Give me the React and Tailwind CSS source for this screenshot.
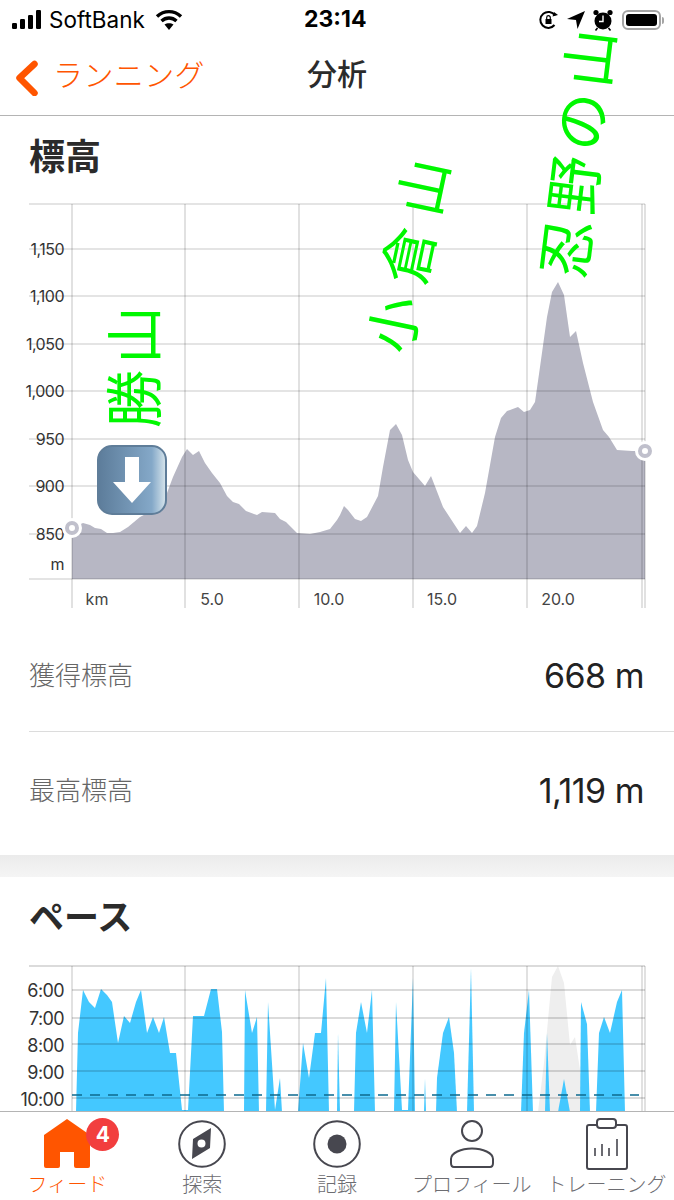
const sans = "font-['Inter','Noto_Sans_CJK_JP',sans-serif]";

const elevation =
  "72,528 83,523 90,525 95,528 101,529 107,533 113,533 120,532 128,527 140,517 157,508 167,493 173,477 182,457 187,449 193,455 199,451 205,463 212,473 220,483 227,496 233,502 239,504 246,511 257,515 262,512 275,513 280,519 286,522 297,533 310,534 320,532 330,529 337,520 340,515 344,506 348,510 355,519 361,521 367,517 378,496 383,467 390,430 396,424 402,435 408,460 413,472 425,486 431,476 443,507 460,533 466,526 472,533 477,526 485,493 495,437 501,418 507,411 518,407 524,412 530,410 535,402 540,367 547,317 552,292 558,282 564,295 570,337 576,331 583,363 593,402 603,430 609,437 617,450 632,451 645,451 645,579 72,579";

const elevYLabels = [
  ["1,150", 249],
  ["1,100", 296],
  ["1,050", 344],
  ["1,000", 391],
  ["950", 439],
  ["900", 486],
  ["850", 534],
  ["m", 564],
];
const elevGrid = [204, 249, 296, 344, 391, 439, 486, 534, 579];
const vLines = [72, 185, 299, 413, 527, 642, 645];
const kmLabels = [
  ["km", 97],
  ["5.0", 212],
  ["10.0", 329],
  ["15.0", 442],
  ["20.0", 558],
];

const paceGrid = [966, 990, 1018, 1044, 1071, 1098];
const paceLabels = [
  ["6:00", 990],
  ["7:00", 1018],
  ["8:00", 1045],
  ["9:00", 1072],
  ["10:00", 1099],
];
const paceShapes = [
  "76,1112 78,1033 83,990 89,1002 95,1008 101,989 107,995 112,1002 118,1043 124,1016 130,1023 136,1002 141,990 147,1033 153,1017 159,1033 164,1017 170,1053 176,1053 182,1110 188,1110 193,1016 204,1016 211,989 217,989 222,1032 224,1112",
  "244,1112 245,990 252,1033 257,1017 259,1112",
  "266,1112 268,1002 275,1110 280,1078 282,1112",
  "298,1112 303,1043 309,1078 315,1033 321,1033 326,978 329,1112",
  "337,1112 338,1033 340,1112",
  "354,1112 356,1033 361,1002 367,1033 372,990 375,1112",
  "394,1112 396,1002 402,1110 408,1110 413,978 415,1112",
  "424,1112 425,1078 426,1112",
  "436,1112 437,1078 443,1033 449,1017 454,1053 457,1112",
  "467,1112 471,968 474,1112",
  "521,1112 524,1033 529,990 533,1112",
  "545,1112 547,1033 550,1112",
  "558,1112 564,1079 570,1112",
  "580,1112 581,1002 587,1024 590,1112",
  "596,1112 599,1033 604,1017 610,1033 617,1002 622,990 625,1112",
];

function StatusBar() {
  return (
    <div className="relative h-[40px] flex items-center justify-between pl-[12px] pr-[10px] text-black">
      <div className="flex items-center gap-[7px]">
        <svg width="30" height="20" viewBox="0 0 30 20" fill="currentColor">
          <rect x="0" y="13" width="5" height="6" rx="1.2" />
          <rect x="8" y="9" width="5" height="10" rx="1.2" />
          <rect x="16" y="5" width="5" height="14" rx="1.2" />
          <rect x="24" y="0" width="5" height="19" rx="1.2" />
        </svg>
        <span className="text-[22.5px] leading-none font-normal font-['Inter',sans-serif]">SoftBank</span>
        <svg className="ml-[3px]" width="28" height="22" viewBox="0 0 28 22" fill="none" stroke="currentColor" strokeWidth="3.4">
          <path d="M2 7.5 C9 1 19 1 26 7.5" />
          <path d="M6.5 12 C11 8 17 8 21.5 12" />
          <path fill="currentColor" stroke="none" d="M14 21 L9.5 15.6 C12 13.8 16 13.8 18.5 15.6 Z" />
        </svg>
      </div>
      <span className="absolute left-[304px] top-[7px] text-[23px] leading-[24px] font-bold font-['Inter',sans-serif]">23:14</span>
      <div className="flex items-center gap-[9px]">
        <svg width="19" height="20" viewBox="0 0 19 20" fill="none" stroke="currentColor" strokeWidth="2">
          <path d="M15.5 15 A8 8 0 1 1 16 5.5" />
          <path fill="currentColor" stroke="none" d="M19 5 L13.5 6.5 L15 2 Z" />
          <rect x="6.5" y="9" width="6" height="5" fill="currentColor" stroke="none" />
          <path d="M7.7 9 V7.5 A1.8 1.8 0 0 1 11.3 7.5 V9" strokeWidth="1.2" />
        </svg>
        <svg width="18" height="18" viewBox="0 0 18 18" fill="currentColor">
          <path d="M18 0 L10.5 18 L9 9 L0 8 Z" />
        </svg>
        <svg className="-ml-[1px]" width="20" height="22" viewBox="0 0 20 22" fill="currentColor">
          <circle cx="10" cy="12" r="8.5" />
          <circle cx="3" cy="3.5" r="2.6" />
          <circle cx="17" cy="3.5" r="2.6" />
          <path d="M4.5 19 L2.5 21.5 M15.5 19 L17.5 21.5" stroke="currentColor" strokeWidth="1.6" />
          <path d="M10 6.5 V12.5 H6" fill="none" stroke="#fff" strokeWidth="1.4" />
        </svg>
        <div className="flex items-center">
          <div className="w-[39px] h-[20px] rounded-[6px] border-2 border-[#a5a5a5] p-[2px]">
            <div className="w-full h-full rounded-[3px] bg-black" />
          </div>
          <div className="w-[2px] h-[7px] rounded-r-sm bg-[#a5a5a5] ml-[1px]" />
        </div>
      </div>
    </div>
  );
}

function NavBar() {
  return (
    <div className="relative h-[75px] flex items-center border-b border-[#b4b4b4] box-content">
      <svg className="ml-[15px]" width="24" height="36" viewBox="0 0 24 36" fill="none" stroke="#ff5500" strokeWidth="6.5" strokeLinecap="round" strokeLinejoin="round">
        <path d="M19.5 4 L4.5 18 L19.5 33" />
      </svg>
      <span className={`ml-[14px] -mt-[4px] text-[30px] tracking-[0.4px] font-light text-[#ff5500] ${sans}`}>ランニング</span>
      <span className={`absolute left-[307px] top-[15px] text-[30px] leading-[38px] font-medium text-[#2b2b2b] ${sans}`}>分析</span>
    </div>
  );
}

function ElevationChart() {
  return (
    <svg className="block" width="674" height="416" viewBox="0 200 674 416">
      <polygon points={elevation} fill="#b7b7c4" />
      {elevGrid.map((y) => (
        <line key={y} x1="29" x2="645" y1={y} y2={y} stroke="#000" strokeOpacity="0.14" strokeWidth="1.5" />
      ))}
      {vLines.map((x) => (
        <line key={x} x1={x} x2={x} y1="204" y2="608" stroke="#000" strokeOpacity="0.16" strokeWidth="1.5" />
      ))}
      {elevYLabels.map(([t, y]) => (
        <text key={t} x="64" y={y + 6} textAnchor="end" fontSize="16" letterSpacing="-0.5" fill="#333" fontFamily="Inter, sans-serif">
          {t}
        </text>
      ))}
      {kmLabels.map(([t, x]) => (
        <text key={t} x={x} y="605" textAnchor="middle" fontSize="16" fill="#444" fontFamily="Inter, sans-serif">
          {t}
        </text>
      ))}
      <circle cx="72" cy="528" r="10" fill="#fff" />
      <circle cx="72" cy="528" r="5" fill="#fff" stroke="#c0c0cc" strokeWidth="4" />
      <circle cx="645" cy="451" r="10" fill="#fff" />
      <circle cx="645" cy="451" r="5" fill="#fff" stroke="#c0c0cc" strokeWidth="4" />
    </svg>
  );
}

function PaceChart() {
  return (
    <svg className="block" width="674" height="160" viewBox="0 960 674 160">
      <polygon points="538,1112 544,1063 552,977 558,966 564,983 570,1045 575,1037 582,1083 586,1112" fill="#eeeeee" />
      {paceShapes.map((p) => (
        <polygon key={p} points={p} fill="#44c8ff" />
      ))}
      {paceGrid.map((y) => (
        <line key={y} x1={y === 966 ? 29 : 72} x2="645" y1={y} y2={y} stroke="#000" strokeOpacity="0.14" strokeWidth="2" />
      ))}
      {vLines.map((x) => (
        <line key={x} x1={x} x2={x} y1="966" y2="1112" stroke="#000" strokeOpacity="0.16" strokeWidth="1.5" />
      ))}
      <line x1="72" x2="639" y1="1095" y2="1095" stroke="#0d6a8f" strokeWidth="1.6" strokeDasharray="10 8" />
      {paceLabels.map(([t, y]) => (
        <text key={t} x="64" y={y + 7} textAnchor="end" fontSize="18" letterSpacing="-0.6" fill="#333" fontFamily="Inter, sans-serif">
          {t}
        </text>
      ))}
    </svg>
  );
}

function StatRow({ label, value, border }) {
  return (
    <div className={`ml-[29px] h-[116px] flex items-center justify-between pr-[30px] ${border ? "pt-[4px] border-b border-[#dcdcdc]" : ""}`}>
      <span className={`text-[26px] font-light text-[#666] ${sans}`}>{label}</span>
      <span className={`text-[34px] text-[#222] tracking-[-0.5px] ${sans}`}>{value}</span>
    </div>
  );
}

function TabBar() {
  const tabs = [
    {
      label: "フィード",
      active: true,
      icon: (
        <div className="relative">
          <svg className="block" width="48" height="50" viewBox="0 0 48 50" fill="#ff5500">
            <path d="M24 0 L47 16 V47 Q47 49 45 49 H33 Q31 49 31 47 V33 H17 V47 Q17 49 15 49 H3 Q1 49 1 47 V16 Z" />
          </svg>
          <div className="absolute -top-[1px] left-[43px] w-[33px] h-[33px] rounded-full bg-[#f23e3e] flex items-center justify-center text-white text-[21px] font-bold font-['Inter',sans-serif]">
            4
          </div>
        </div>
      ),
    },
    {
      label: "探索",
      icon: (
        <svg width="48" height="48" viewBox="0 0 48 48" fill="none">
          <circle cx="24" cy="24" r="22.8" stroke="#47474f" strokeWidth="2" />
          <path fillRule="evenodd" fill="#47474f" d="M33 8 L32 28 L14 39 L15 19 Z M23.5 19.5 A4 4 0 1 0 23.5 27.5 A4 4 0 1 0 23.5 19.5 Z" />
        </svg>
      ),
    },
    {
      label: "記録",
      icon: (
        <svg width="48" height="48" viewBox="0 0 48 48" fill="none">
          <circle cx="24" cy="24" r="22.8" stroke="#47474f" strokeWidth="2" />
          <circle cx="24" cy="24" r="9.5" fill="#47474f" />
        </svg>
      ),
    },
    {
      label: "プロフィール",
      icon: (
        <svg width="46" height="50" viewBox="0 0 46 50" fill="none" stroke="#47474f" strokeWidth="2">
          <circle cx="23" cy="12" r="10" />
          <path d="M5 48 Q2 48 2 44 V40 C2 34 12 29.5 23 29.5 C34 29.5 44 34 44 40 V44 Q44 48 41 48 Z" />
        </svg>
      ),
    },
    {
      label: "トレーニング",
      icon: (
        <svg width="44" height="52" viewBox="0 0 44 52" fill="none" stroke="#47474f" strokeWidth="2">
          <rect x="2" y="7" width="40" height="44" rx="2" />
          <rect x="12" y="1" width="19" height="9" rx="3" fill="#fff" />
          <path d="M10 30 V38 M17 26 V38 M24 30 V38 M32 21 V38" strokeWidth="1.6" />
        </svg>
      ),
    },
  ];

  return (
    <div className="h-[89px] shrink-0 bg-white border-t border-[#b4b4b4] flex">
      {tabs.map((t) => (
        <div key={t.label} className="w-[134.8px] relative flex flex-col items-center">
          <div className="h-[58px] mt-[3px] flex items-center justify-center">{t.icon}</div>
          <span className={`whitespace-nowrap text-[20px] leading-[24px] ${sans} ${t.active ? "text-[#ff5500]" : "text-[#6d6d72]"} font-light`}>
            {t.label}
          </span>
        </div>
      ))}
    </div>
  );
}

const green = "absolute z-20 whitespace-nowrap text-[#00f700] font-['Noto_Sans_CJK_JP',sans-serif] font-normal leading-none -translate-x-1/2 -translate-y-1/2";

export default function App() {
  return (
    <div className="relative w-[674px] h-[1200px] overflow-hidden bg-white flex flex-col">
      <StatusBar />
      <NavBar />
      <div className="flex-1 overflow-hidden">
        <h2 className={`ml-[29px] mt-[18px] text-[36px] leading-[46px] font-semibold text-[#2b2b2b] ${sans}`}>標高</h2>
        <div className="mt-[20px]">
          <ElevationChart />
        </div>
        <StatRow label="獲得標高" value="668 m" border />
        <StatRow label="最高標高" value="1,119 m" />
        <div className="mt-[7px] h-[22px] bg-gradient-to-b from-[#ebebeb] to-[#f5f5f5]" />
        <h2 className={`ml-[29px] mt-[17px] text-[35px] leading-[46px] font-semibold text-[#2b2b2b] ${sans}`}>ペース</h2>
        <div className="mt-[20px]">
          <PaceChart />
        </div>
      </div>
      <TabBar />

      {/* handwritten notes on top of the screenshot */}
      <div className={`${green} left-[131px] top-[364px] -rotate-90 text-[58px] tracking-[6px]`}>勝山</div>
      <div className={`${green} left-[407px] top-[248px] rotate-[-78deg] text-[56px] tracking-[14px]`}>小倉山</div>
      <div className={`${green} left-[575px] top-[150px] rotate-[-83deg] text-[58px] tracking-[6px]`}>忍野の山</div>

      <div className="absolute left-[97px] top-[445px] w-[70px] h-[70px] rounded-[15px] border-2 border-[#5f7d99] bg-gradient-to-r from-[#5d7d9b] via-[#84a8c8] via-80% to-[#d3e2ea] flex items-center justify-center">
        <svg width="38" height="46" viewBox="0 0 38 46" fill="#fff">
          <path d="M12 0 H26 V25 H38 L19 46 L0 25 H12 Z" />
        </svg>
      </div>
    </div>
  );
}
